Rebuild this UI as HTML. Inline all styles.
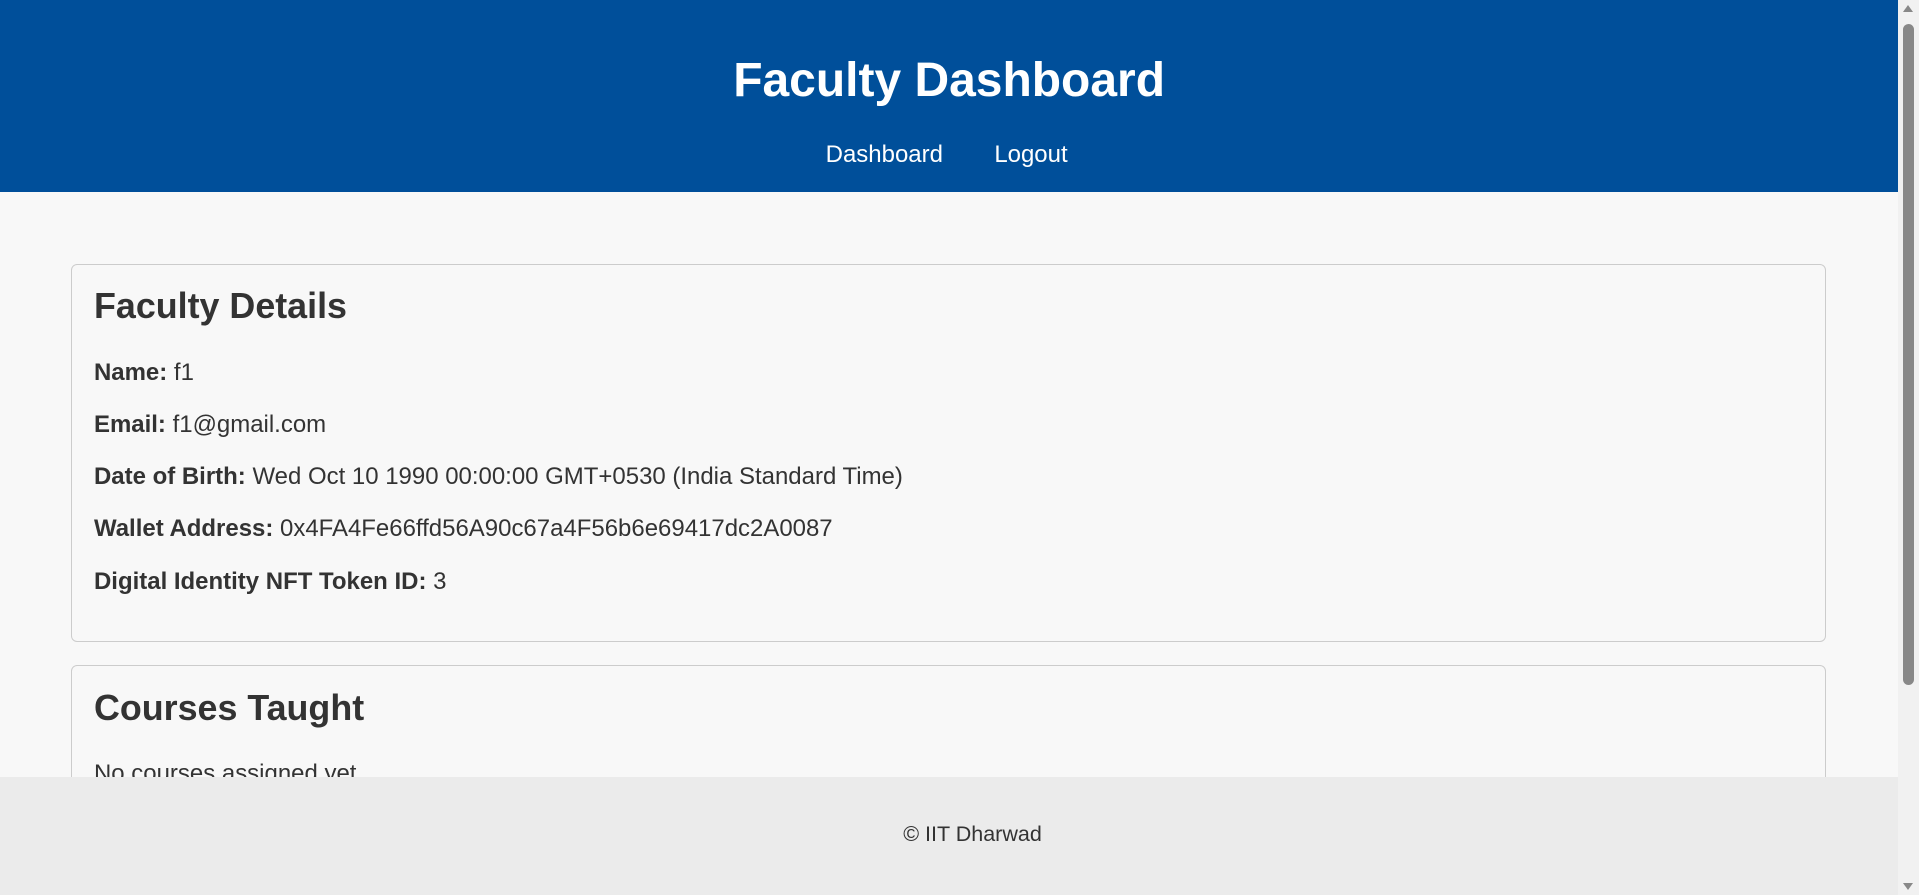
<!DOCTYPE html>
<html><head><meta charset="utf-8"><style>
html{zoom:1.22385}
html,body{margin:0;padding:0;overflow:hidden}
body{width:1568px;height:731px;position:relative;background:#f8f8f8;font-family:"Liberation Sans",Arial,sans-serif;color:#333}
.hdr{position:absolute;left:0;top:0;width:1551px;height:157px;background:#004f9a;color:#fff;text-align:center}
.hdr h1{margin:0;position:absolute;top:43px;left:0;width:100%;font-size:39.2px;line-height:46px}
.nav{position:absolute;top:114px;left:-2px;width:100%;font-size:19.6px;line-height:24px}
.nav span{margin:0 21px}
.card{position:absolute;left:58px;width:1432px;border:1px solid #ccc;border-radius:5px;background:#f8f8f8}
.card h2{position:absolute;left:18px;margin:0;font-size:29.3px;line-height:34px}
.card p{position:absolute;left:18px;margin:0;font-size:19.6px;line-height:22px;white-space:nowrap}
.foot{position:absolute;left:0;top:635px;width:1551px;height:96px;background:#ebebeb;font-size:17.6px;line-height:22px}
.sb{position:absolute;right:0;top:0;width:17px;height:731px;background:#f1f1f1}
.th{position:absolute;left:4px;top:20px;width:9px;height:540px;background:#888;border-radius:5px}
</style></head><body>
<div class="hdr"><h1>Faculty Dashboard</h1><div class="nav"><span>Dashboard</span><span>Logout</span></div></div>
<div class="card" style="top:216px;height:307px">
<h2 style="top:17px">Faculty Details</h2>
<p style="top:77px"><b>Name:</b> f1</p>
<p style="top:120px"><b>Email:</b> f1@gmail.com</p>
<p style="top:162px"><b>Date of Birth:</b> Wed Oct 10 1990 00:00:00 GMT+0530 (India Standard Time)</p>
<p style="top:205px"><b>Wallet Address:</b> 0x4FA4Fe66ffd56A90c67a4F56b6e69417dc2A0087</p>
<p style="top:248px"><b>Digital Identity NFT Token ID:</b> 3</p>
</div>
<div class="card" style="top:543px;height:200px">
<h2 style="top:18px">Courses Taught</h2>
<p style="top:78px">No courses assigned yet.</p>
</div>
<div class="foot"><div style="position:absolute;top:36px;left:738px;white-space:nowrap">© IIT Dharwad</div></div>
<div class="sb"><div class="th"></div>
<div style="position:absolute;left:4px;top:4px;width:0;height:0;border-left:4.5px solid transparent;border-right:4.5px solid transparent;border-bottom:6px solid #888"></div>
<div style="position:absolute;left:4px;bottom:4px;width:0;height:0;border-left:4.5px solid transparent;border-right:4.5px solid transparent;border-top:6px solid #888"></div>
</div>
</body></html>
